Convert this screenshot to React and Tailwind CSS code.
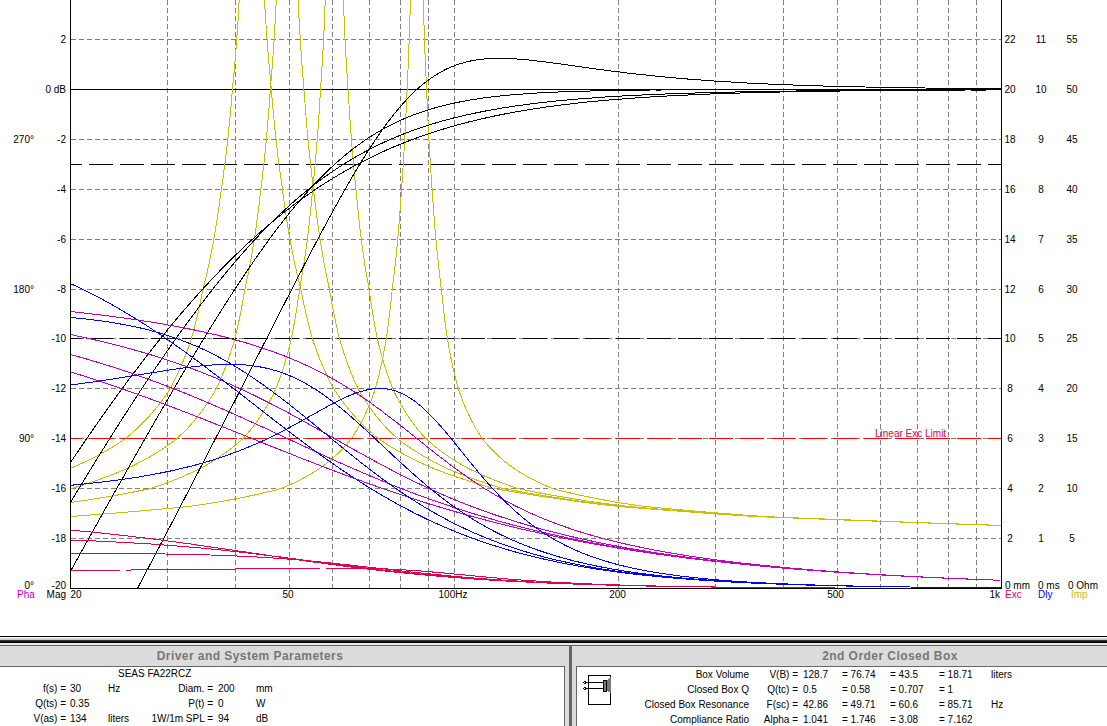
import React from "react";

const W = 1107;
const PLOT_L = 70.5;
const PLOT_R = 1001.5;
const BOTTOM = 588.5;
const PX_PER_DB = 24.95;

const FONT = { fontFamily: "'Liberation Sans', Arial, sans-serif" };

const YELLOW = "#c8c000";
const MAGENTA = "#c000c0";
const BLUE = "#0000ff";
const CRIMSON = "#e0004c";

// the four alignments of the closed box
const boxes = [
  { fc: 42.86, q: 0.5 },
  { fc: 49.71, q: 0.58 },
  { fc: 60.6, q: 0.707 },
  { fc: 85.71, q: 1 },
];

const freqToX = (f) => PLOT_L + (Math.log10(f / 20) / Math.log10(50)) * (PLOT_R - PLOT_L);
const xToFreq = (x) => 20 * Math.pow(50, (x - PLOT_L) / (PLOT_R - PLOT_L));
const den = (r, q) => Math.sqrt((1 - r * r) ** 2 + (r / q) ** 2);

const magnitude = ({ fc, q }, f) => {
  const r = f / fc;
  return 89.5 - PX_PER_DB * 20 * Math.log10((r * r) / den(r, q));
};
const phase = ({ fc, q }, f) => {
  const r = f / fc;
  const deg = 180 - (Math.atan2(r / q, 1 - r * r) * 180) / Math.PI;
  return BOTTOM - (deg * 5) / 3;
};
const delay = ({ fc, q }, f) => {
  const r = f / fc;
  const wc = 2 * Math.PI * fc;
  const ms = (1000 / (q * wc)) * ((1 + r * r) / den(r, q) ** 2);
  return BOTTOM - ms * 50;
};
const excursion = ({ fc, q }, f) => {
  const r = f / fc;
  return BOTTOM - (25 * 5217) / (fc * fc * den(r, q));
};

// impedance against detuning, read off the plot: [fc * |f/fc - fc/f|, ohm]
const zTable = [
  [4.5, 59],
  [7, 50],
  [11, 40],
  [17.7, 30],
  [22, 25],
  [30, 20],
  [47.7, 15],
  [72, 12],
  [103, 10],
  [163, 8.6],
  [191, 8.2],
  [347, 7.2],
  [999, 6.3],
  [1500, 6.2],
];
const impedance = ({ fc }, f) => {
  const w = Math.max(fc * Math.abs(f / fc - fc / f), 0.5);
  if (w < zTable[0][0]) return BOTTOM - 10 * 59 * Math.pow(zTable[0][0] / w, 0.5);
  let i = 0;
  while (i < zTable.length - 2 && w > zTable[i + 1][0]) i++;
  const [w0, z0] = zTable[i];
  const [w1, z1] = zTable[i + 1];
  const t = Math.log(w / w0) / Math.log(w1 / w0);
  return BOTTOM - 10 * z0 * Math.pow(z1 / z0, t);
};

const trace = (fn, box, step = 5) => {
  const pts = [];
  for (let x = PLOT_L; x <= PLOT_R; x += step) {
    const y = Math.max(Math.min(fn(box, xToFreq(x)), 800), -60);
    pts.push(`${x},${y.toFixed(1)}`);
  }
  return pts.join(" ");
};

const gridX = [30, 40, 50, 60, 70, 80, 90, 100, 200, 300, 400, 500, 600, 700, 800, 900];
const gridY = [39.5, 139.5, 189.5, 239.5, 289.5, 338.5, 388.5, 438.5, 488.5, 538.5];

const leftAxis = [
  [39, "2"],
  [89, "0 dB"],
  [139, "-2"],
  [189, "-4"],
  [239, "-6"],
  [289, "-8"],
  [338, "-10"],
  [388, "-12"],
  [438, "-14"],
  [488, "-16"],
  [538, "-18"],
  [585, "-20"],
];
const phaseAxis = [
  [139, "270°"],
  [289, "180°"],
  [438, "90°"],
  [585, "0°"],
];
const rightAxis = [
  [39, "22", "11", "55"],
  [89, "20", "10", "50"],
  [139, "18", "9", "45"],
  [189, "16", "8", "40"],
  [239, "14", "7", "35"],
  [289, "12", "6", "30"],
  [338, "10", "5", "25"],
  [388, "8", "4", "20"],
  [438, "6", "3", "15"],
  [488, "4", "2", "10"],
  [538, "2", "1", "5"],
];
const freqLabels = [
  [76, "20"],
  [288, "50"],
  [453, "100Hz"],
  [617.5, "200"],
  [835.5, "500"],
];

const DashLine = ({ y, color }) => (
  <line x1={70} x2={PLOT_R} y1={y} y2={y} stroke={color} strokeDasharray="24 7" strokeDashoffset={12} />
);

const Chart = () => (
  <svg width={W} height={636} className="block" style={FONT}>
    <g shapeRendering="crispEdges" fill="none">
      {gridX.map((f) => (
        <line key={f} x1={Math.round(freqToX(f)) + 0.5} x2={Math.round(freqToX(f)) + 0.5} y1={0} y2={BOTTOM} stroke="#808080" strokeDasharray="5 3" />
      ))}
      {gridY.map((y) => (
        <line key={y} x1={PLOT_L} x2={PLOT_R} y1={y} y2={y} stroke="#808080" strokeDasharray="5 3" />
      ))}
      <line x1={PLOT_L} x2={PLOT_R} y1={89.5} y2={89.5} stroke="#000" />
      <DashLine y={164.5} color="#000" />
      <DashLine y={338.5} color="#000" />
      <DashLine y={438.5} color="#ff0000" />

      {boxes.map((b) => (
        <polyline key={`i${b.fc}`} points={trace(impedance, b, 2)} stroke={YELLOW} />
      ))}
      {boxes.map((b) => (
        <polyline key={`m${b.fc}`} points={trace(magnitude, b)} stroke="#000" />
      ))}
      {boxes.map((b) => (
        <polyline key={`p${b.fc}`} points={trace(phase, b)} stroke={MAGENTA} />
      ))}
      {boxes.map((b) => (
        <polyline key={`d${b.fc}`} points={trace(delay, b)} stroke={BLUE} />
      ))}
      {boxes.map((b) => (
        <polyline key={`e${b.fc}`} points={trace(excursion, b)} stroke={CRIMSON} />
      ))}

      <rect x={0} y={589} width={W} height={47} fill="#fff" stroke="none" />
      <rect x={0} y={0} width={70} height={589} fill="#fff" stroke="none" />
      <rect x={1002} y={0} width={105} height={589} fill="#fff" stroke="none" />
      <line x1={70.5} x2={70.5} y1={0} y2={589} stroke="#000" />
      <line x1={1001.5} x2={1001.5} y1={0} y2={589} stroke="#000" />
      <line x1={70} x2={1002} y1={588.5} y2={588.5} stroke="#000" />
    </g>

    <g fontSize={10} fill="#000">
      {leftAxis.map(([y, t]) => (
        <text key={t} x={66} y={y + 4} textAnchor="end">{t}</text>
      ))}
      {phaseAxis.map(([y, t]) => (
        <text key={t} x={34} y={y + 4} textAnchor="end">{t}</text>
      ))}
      {rightAxis.map(([y, a, b, c]) => (
        <g key={y}>
          <text x={1010} y={y + 4} textAnchor="middle">{a}</text>
          <text x={1041} y={y + 4} textAnchor="middle">{b}</text>
          <text x={1072} y={y + 4} textAnchor="middle">{c}</text>
        </g>
      ))}
      {freqLabels.map(([x, t]) => (
        <text key={t} x={x} y={598} textAnchor="middle">{t}</text>
      ))}
      <text x={1000} y={598} textAnchor="end">1k</text>
      <text x={66} y={598} textAnchor="end">Mag</text>
      <text x={1005} y={589}>0 mm</text>
      <text x={1038} y={589}>0 ms</text>
      <text x={1068} y={589}>0 Ohm</text>
      <text x={875} y={437} fill={CRIMSON}>Linear Exc Limit</text>
      <text x={17} y={598} fill={MAGENTA}>Pha</text>
      <text x={1005} y={598} fill={CRIMSON}>Exc</text>
      <text x={1038} y={598} fill={BLUE}>Dly</text>
      <text x={1071} y={598} fill={YELLOW}>Imp</text>
    </g>
  </svg>
);

const SpeakerIcon = () => (
  <svg width={29} height={32} viewBox="0 0 29 32" shapeRendering="crispEdges" className="absolute left-[6px] top-[8px]">
    <rect x="5.5" y="0.5" width="22" height="29" fill="#fff" stroke="#000" />
    <path d="M2 7.5H20M2 13.5H20" stroke="#000" />
    <path d="M0.5 7.5L2.5 6M0.5 7.5L2.5 9M0.5 13.5L2.5 12M0.5 13.5L2.5 15" stroke="#000" />
    <path d="M23 6L28 1V18L23 15Z" fill="#777" />
    <path d="M20.5 5.5H23.5V16.5H20.5Z" fill="#777" stroke="#000" />
  </svg>
);

const Row = ({ children }) => <div className="flex h-[15px] items-center leading-none whitespace-pre">{children}</div>;
const Cell = ({ w, right, children }) => (
  <span className={right ? "inline-block shrink-0 text-right" : "inline-block shrink-0"} style={{ width: w }}>
    {children}
  </span>
);

const driverRows = [
  ["f(s) =", "30", "Hz", "Diam. =", "200", "mm"],
  ["Q(ts) =", "0.35", "", "P(t) =", "0", "W"],
  ["V(as) =", "134", "liters", "1W/1m SPL =", "94", "dB"],
];

const boxRows = [
  ["Box Volume", "V(B) =", "128.7", "= 76.74", "= 43.5", "= 18.71", "liters"],
  ["Closed Box Q", "Q(tc) =", "0.5", "= 0.58", "= 0.707", "= 1", ""],
  ["Closed Box Resonance", "F(sc) =", "42.86", "= 49.71", "= 60.6", "= 85.71", "Hz"],
  ["Compliance Ratio", "Alpha =", "1.041", "= 1.746", "= 3.08", "= 7.162", ""],
];

const TitleBar = ({ children, className }) => (
  <div className={`flex h-[20px] shrink-0 items-center justify-center text-[12px] font-bold tracking-[0.45px] text-[#777] ${className}`}>
    {children}
  </div>
);

export default function App() {
  return (
    <div className="h-[726px] w-[1107px] overflow-hidden bg-white text-[10px] text-black" style={FONT}>
      <Chart />
      <div className="h-px bg-black" />
      <div className="h-[3px] bg-gradient-to-b from-white to-[#bbb]" />
      <div className="h-[3px] bg-gradient-to-b from-[#444] to-black" />
      <div className="h-[2px] bg-[#e8e8e8]" />
      <div className="flex h-[81px] border-t border-[#666]">
        <div className="flex w-[569px] shrink-0 flex-col bg-[#dcdcdc]">
          <TitleBar className="pr-[69px]">Driver and System Parameters</TitleBar>
          <div className="mr-[4px] flex-1 border-r border-t border-[#666] bg-white">
            <div className="h-[14px] pl-[118px] pt-px leading-[12px]">SEAS FA22RCZ</div>
            {driverRows.map((r) => (
              <Row key={r[0]}>
                <Cell w={66} right>{r[0]}</Cell>
                <Cell w={4} />
                <Cell w={38}>{r[1]}</Cell>
                <Cell w={40}>{r[2]}</Cell>
                <Cell w={65} right>{r[3]}</Cell>
                <Cell w={5} />
                <Cell w={38}>{r[4]}</Cell>
                <Cell w={40}>{r[5]}</Cell>
              </Row>
            ))}
          </div>
        </div>
        <div className="w-[3px] shrink-0 bg-[#666]" />
        <div className="flex min-w-0 flex-1 flex-col bg-[#dcdcdc]">
          <TitleBar className="pl-[101px]">2nd Order Closed Box</TitleBar>
          <div className="relative ml-[4px] flex-1 border-l border-t border-[#666] bg-white">
            <SpeakerIcon />
            {boxRows.map((r) => (
              <Row key={r[0]}>
                <Cell w={172} right>{r[0]}</Cell>
                <Cell w={49} right>{r[1]}</Cell>
                <Cell w={5} />
                <Cell w={39}>{r[2]}</Cell>
                <Cell w={48}>{r[3]}</Cell>
                <Cell w={49}>{r[4]}</Cell>
                <Cell w={52}>{r[5]}</Cell>
                <Cell w={40}>{r[6]}</Cell>
              </Row>
            ))}
          </div>
        </div>
      </div>
    </div>
  );
}
